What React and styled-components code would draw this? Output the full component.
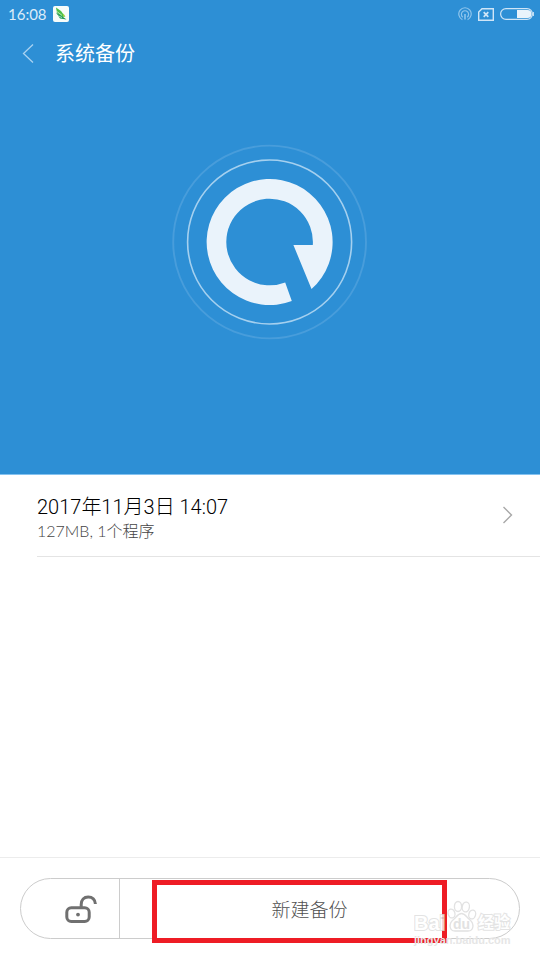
import styled, { createGlobalStyle } from 'styled-components';

const GlobalStyle = createGlobalStyle`
  * {
    box-sizing: border-box;
    margin: 0;
    padding: 0;
  }

  body {
    background-color: #ffffff;
    font-family: Roboto, 'Noto Sans CJK SC', sans-serif;
    font-weight: 300;
  }

  button {
    background: transparent;
    border: none;
    font-family: inherit;
    font-weight: inherit;
    cursor: pointer;
  }
`;

const Page = styled.div`
  display: flex;
  flex-direction: column;
  min-height: 100vh;
`;

const Hero = styled.header`
  display: flex;
  flex-direction: column;
  background-color: #2d8fd5;
  border-bottom: 1px solid #84c2f0;
`;

const StatusBar = styled.div`
  display: flex;
  align-items: center;
  justify-content: space-between;
  height: 28px;
  padding: 0 6px 0 8px;
`;

const StatusGroup = styled.div`
  display: flex;
  align-items: center;
  gap: 6px;
`;

const Clock = styled.time`
  color: #dcecf9;
  font-family: Lato, sans-serif;
  font-size: 15px;
  font-weight: 400;
  line-height: 28px;
`;

const TitleBar = styled.div`
  display: flex;
  align-items: center;
  height: 52px;
  padding-left: 20px;
`;

const BackButton = styled.button`
  display: flex;
  width: 35px;
  height: 24px;
`;

const Title = styled.h1`
  color: #ffffff;
  font-size: 20px;
  font-weight: 400;
  line-height: 30px;
`;

const LogoArea = styled.div`
  display: flex;
  justify-content: center;
  padding: 64px 0 134px;
`;

const BackupList = styled.main`
  flex: 1;
  padding-left: 37px;
`;

const BackupRow = styled.button`
  display: flex;
  align-items: center;
  justify-content: space-between;
  width: 100%;
  height: 82px;
  padding-right: 24px;
  border-bottom: 1px solid #e4e4e4;
  text-align: left;
`;

const BackupInfo = styled.span`
  display: flex;
  flex-direction: column;
  padding-top: 6px;
`;

const BackupDate = styled.span`
  color: #000000;
  font-size: 20px;
  line-height: 25px;
`;

const BackupDetail = styled.span`
  color: #444444;
  font-family: Lato, 'Noto Sans CJK SC', sans-serif;
  font-size: 16px;
  line-height: 22px;
`;

const Footer = styled.footer`
  position: relative;
  padding: 20px 20px 21px;
  border-top: 1px solid #ececec;
`;

const ActionBar = styled.div`
  display: flex;
  height: 61px;
  border: 1px solid #cccccc;
  border-radius: 31px;
`;

const LockButton = styled.button`
  display: flex;
  align-items: center;
  justify-content: flex-end;
  width: 99px;
  padding-right: 22px;
  border-right: 1px solid #cccccc;
`;

const NewBackupButton = styled.button`
  position: relative;
  flex: 1;
  padding: 4px 20px 0 0;
  color: #505050;
  font-size: 19px;
  line-height: 28px;
`;

const Highlight = styled.span`
  position: absolute;
  top: 1px;
  right: 72px;
  bottom: -5px;
  left: 32px;
  border: 5px solid #ee1c25;
  pointer-events: none;
`;

const Watermark = styled.div`
  position: absolute;
  right: 30px;
  bottom: 12px;
  width: 96px;
  pointer-events: none;
`;

const WatermarkBrand = styled.div`
  display: flex;
  align-items: flex-end;
  justify-content: space-between;
  height: 32px;
`;

const WatermarkText = styled.span`
  color: #ffffff;
  font-family: 'Liberation Sans', 'Noto Sans CJK SC', sans-serif;
  font-size: ${(props) => props.$size}px;
  font-weight: 700;
  line-height: 18px;
  opacity: 0.8;
  paint-order: stroke fill;
  -webkit-text-stroke: 2px #dddddd;
`;

const WatermarkUrl = styled.p`
  color: #e6e6e6;
  font-family: 'Liberation Sans', sans-serif;
  font-size: 11px;
  font-weight: 700;
  line-height: 16px;
  white-space: nowrap;
`;

function AppIcon() {
  return (
    <svg width="16" height="16" viewBox="0 0 16 16" aria-hidden="true">
      <rect width="16" height="16" rx="2" fill="#f7fcfa" />
      <path d="M3 1.5 L8 5 L12 10.5 L9 11 L4 7 Z" fill="#4cbf45" />
      <path d="M3 6.5 L8 9.5 L13.5 13.5 L7 12.5 Z" fill="#1f9b55" />
      <path d="M10.5 7.5 L12.5 11 L10 10 Z" fill="#a8d13c" />
      <path d="M3.5 5.2 L9 9.4 M4 9.3 L9 11.6" stroke="#f7fcfa" strokeWidth="0.6" />
    </svg>
  );
}

function HotspotIcon() {
  return (
    <svg width="14" height="14" viewBox="0 0 14 14" fill="none" stroke="#8fc5ec" aria-hidden="true">
      <path d="M4.4 12.6 A6.2 6.2 0 1 1 9.6 12.6" strokeWidth="1.2" />
      <path d="M4.8 10.2 A3.6 3.6 0 1 1 9.2 10.2" strokeWidth="1.2" />
      <path d="M7 7 V12.5" strokeWidth="1.6" />
    </svg>
  );
}

function NoSimIcon() {
  return (
    <svg width="16" height="13" viewBox="0 0 16 13" fill="none" stroke="#cfe5f7" aria-hidden="true">
      <path d="M4 0.7 H15.3 V12.3 H0.7 V4 Z" strokeWidth="1.4" />
      <path d="M5.7 4.2 L10.3 8.8 M10.3 4.2 L5.7 8.8" strokeWidth="1.7" />
    </svg>
  );
}

function BatteryIcon() {
  return (
    <svg width="34" height="12" viewBox="0 0 34 12" aria-hidden="true">
      <rect x="0.6" y="0.6" width="31.8" height="10.8" rx="5.4" fill="none" stroke="#cfe5f7" strokeWidth="1.2" />
      <path d="M17 2 H27.5 A4 4 0 0 1 27.5 10 H17 Z" fill="#e9f3fb" />
      <path d="M33.4 4 V8" stroke="#cfe5f7" />
    </svg>
  );
}

function BackupLogo() {
  return (
    <svg width="196" height="196" viewBox="-97.6 -98 196 196" aria-hidden="true">
      <circle r="96.4" fill="none" stroke="#489ddb" strokeWidth="1.9" />
      <circle r="82" fill="none" stroke="#a5d0ef" strokeWidth="1.6" />
      <path
        d="M22.2 59 A63 63 0 1 1 41.9 47.1 L23.8 3 H43.2 A43.3 43.3 0 1 0 15.6 40.4 Z"
        fill="#eaf3fb"
      />
    </svg>
  );
}

function UnlockIcon() {
  return (
    <svg width="32" height="28" viewBox="0 0 32 28" fill="none" stroke="#707070" strokeWidth="3" aria-hidden="true">
      <rect x="1.8" y="12.8" width="22.4" height="13.6" rx="4.5" />
      <path d="M16.2 12 V9.5 C16.2 4.8 19 2 23.2 2 C27.4 2 30.2 4.8 30.4 9" />
      <circle cx="13" cy="19.6" r="1.9" fill="#707070" stroke="none" />
    </svg>
  );
}

function PawLogo() {
  return (
    <svg width="30" height="32" viewBox="0 0 30 32" fill="#ffffff" stroke="#dddddd" strokeWidth="1.3" opacity="0.85" aria-hidden="true">
      <ellipse cx="4.5" cy="13.5" rx="3.4" ry="4.5" transform="rotate(-15 4.5 13.5)" />
      <ellipse cx="11" cy="6.5" rx="3.6" ry="5" />
      <ellipse cx="18.8" cy="7" rx="3.6" ry="5" transform="rotate(10 18.8 7)" />
      <ellipse cx="25.2" cy="14.5" rx="3.4" ry="4.5" transform="rotate(15 25.2 14.5)" />
      <path d="M14.5 13.5 C18 13.5 19.5 17 22.5 19.5 C27.5 23.5 27 31 21 31 C17 31 12 31 8 31 C2 31 1.5 23.5 6.5 19.5 C9.5 17 11 13.5 14.5 13.5 Z" />
      <text x="14.5" y="29" textAnchor="middle" fontFamily="Liberation Sans, sans-serif" fontSize="14" fontWeight="700" fill="#dddddd" stroke="none">
        du
      </text>
    </svg>
  );
}

export default function App() {
  return (
    <Page>
      <GlobalStyle />
      <Hero>
        <StatusBar>
          <StatusGroup>
            <Clock>16:08</Clock>
            <AppIcon />
          </StatusGroup>
          <StatusGroup>
            <HotspotIcon />
            <NoSimIcon />
            <BatteryIcon />
          </StatusGroup>
        </StatusBar>
        <TitleBar>
          <BackButton type="button" aria-label="返回">
            <svg width="16" height="24" viewBox="0 0 16 24" fill="none" stroke="#a9d2f1" strokeWidth="1.3">
              <path d="M13 2.5 L3.5 11.5 L13 20.5" />
            </svg>
          </BackButton>
          <Title>系统备份</Title>
        </TitleBar>
        <LogoArea>
          <BackupLogo />
        </LogoArea>
      </Hero>
      <BackupList>
        <BackupRow type="button">
          <BackupInfo>
            <BackupDate>2017年11月3日 14:07</BackupDate>
            <BackupDetail>127MB, 1个程序</BackupDetail>
          </BackupInfo>
          <svg width="14" height="20" viewBox="0 0 14 20" fill="none" stroke="#a8a8a8" strokeWidth="1.4" aria-hidden="true">
            <path d="M1.5 1 L9.5 9 L1.5 17" />
          </svg>
        </BackupRow>
      </BackupList>
      <Footer>
        <ActionBar>
          <LockButton type="button" aria-label="解锁">
            <UnlockIcon />
          </LockButton>
          <NewBackupButton type="button">
            新建备份
            <Highlight />
          </NewBackupButton>
        </ActionBar>
        <Watermark>
          <WatermarkBrand>
            <WatermarkText $size={20}>Bai</WatermarkText>
            <PawLogo />
            <WatermarkText $size={16}>经验</WatermarkText>
          </WatermarkBrand>
          <WatermarkUrl>jingyan.baidu.com</WatermarkUrl>
        </Watermark>
      </Footer>
    </Page>
  );
}
